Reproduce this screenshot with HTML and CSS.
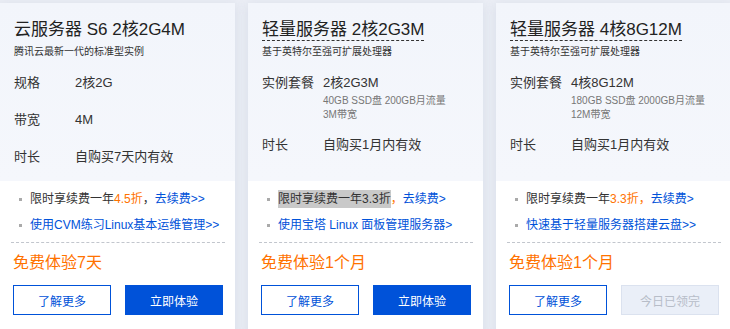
FILE: index.html
```html
<!DOCTYPE html>
<html lang="zh-CN">
<head>
    <meta charset="UTF-8">
    <meta name="viewport" content="width=device-width, initial-scale=1.0">
    <title>服务器免费体验</title>
    <link rel="stylesheet" href="styles.css">
</head>
<body>

    <div class="cards">
        <div class="card">
            <div class="card-top">
                <h2 class="card-title"><span>云服务器 S6 2核2G4M</span></h2>
                <p class="card-desc">腾讯云最新一代的标准型实例</p>
                <div class="specs">
                    <div class="spec-row"><span class="spec-label">规格</span><div class="spec-value">2核2G</div></div>
                    <div class="spec-row"><span class="spec-label">带宽</span><div class="spec-value">4M</div></div>
                    <div class="spec-row"><span class="spec-label">时长</span><div class="spec-value">自购买7天内有效</div></div>
                </div>
            </div>
            <div class="card-bottom">
                <ul class="perks">
                    <li>限时享续费一年<span class="orange">4.5折</span>，<a class="link">去续费&gt;&gt;</a></li>
                    <li><a class="link">使用CVM练习Linux基本运维管理&gt;&gt;</a></li>
                </ul>
                <div class="divider"></div>
                <div class="offer">免费体验7天</div>
                <div class="actions">
                    <button class="btn btn-outline">了解更多</button>
                    <button class="btn btn-primary">立即体验</button>
                </div>
            </div>
        </div>

        <div class="card">
            <div class="card-top">
                <h2 class="card-title"><span class="dashed">轻量服务器 2核2G3M</span></h2>
                <p class="card-desc">基于英特尔至强可扩展处理器</p>
                <div class="specs specs-compact">
                    <div class="spec-row">
                        <span class="spec-label">实例套餐</span>
                        <div class="spec-value">2核2G3M
                            <div class="spec-note">40GB SSD盘 200GB月流量<br>3M带宽</div>
                        </div>
                    </div>
                    <div class="spec-row"><span class="spec-label">时长</span><div class="spec-value">自购买1月内有效</div></div>
                </div>
            </div>
            <div class="card-bottom">
                <ul class="perks">
                    <li><span class="selected">限时享续费一年3.3折</span><span class="orange">，</span><a class="link">去续费&gt;</a></li>
                    <li><a class="link">使用宝塔 Linux 面板管理服务器&gt;</a></li>
                </ul>
                <div class="divider"></div>
                <div class="offer">免费体验1个月</div>
                <div class="actions">
                    <button class="btn btn-outline">了解更多</button>
                    <button class="btn btn-primary">立即体验</button>
                </div>
            </div>
        </div>

        <div class="card">
            <div class="card-top">
                <h2 class="card-title"><span class="dashed">轻量服务器 4核8G12M</span></h2>
                <p class="card-desc">基于英特尔至强可扩展处理器</p>
                <div class="specs specs-compact">
                    <div class="spec-row">
                        <span class="spec-label">实例套餐</span>
                        <div class="spec-value">4核8G12M
                            <div class="spec-note">180GB SSD盘 2000GB月流量<br>12M带宽</div>
                        </div>
                    </div>
                    <div class="spec-row"><span class="spec-label">时长</span><div class="spec-value">自购买1月内有效</div></div>
                </div>
            </div>
            <div class="card-bottom">
                <ul class="perks">
                    <li>限时享续费一年<span class="orange">3.3折，</span> <a class="link">去续费&gt;</a></li>
                    <li><a class="link">快速基于轻量服务器搭建云盘&gt;&gt;</a></li>
                </ul>
                <div class="divider"></div>
                <div class="offer">免费体验1个月</div>
                <div class="actions">
                    <button class="btn btn-outline">了解更多</button>
                    <button class="btn btn-disabled" disabled>今日已领完</button>
                </div>
            </div>
        </div>
    </div>

</body>
</html>
```

FILE: styles.css
```css
body {
    margin: 0;
    background: #ebeef5;
    font-family: "Liberation Sans", "Noto Sans CJK SC", sans-serif;
    color: #333;
    overflow: hidden;
}
.cards {
    display: flex;
    gap: 13px;
    padding-top: 3px;
    width: 731px;
}
.card {
    flex: 0 0 235px;
    background: #fff;
    box-shadow: 0 2px 10px rgba(150, 165, 195, 0.25);
}
.card-top {
    height: 178px;
    box-sizing: border-box;
    padding: 17px 14px 0;
    background: linear-gradient(to bottom, #f2f5fb, #f5f7fc);
}
.card-title {
    margin: 0;
    font-size: 17px;
    font-weight: normal;
    line-height: 20px;
    color: #222;
}
.card-title span {
    display: inline-block;
    border-bottom: 1px solid transparent;
}
.card-title .dashed {
    border-bottom: 1px dashed #333;
}
.card-desc {
    margin: 4px 0 0;
    font-size: 10px;
    line-height: 14px;
    color: #333;
}
.specs {
    display: flex;
    flex-direction: column;
    gap: 17px;
    margin-top: 14px;
}
.specs-compact {
    gap: 13px;
}
.spec-row {
    display: flex;
    font-size: 13px;
    line-height: 20px;
}
.spec-label {
    flex: 0 0 61px;
}
.spec-note {
    margin-top: 1px;
    font-size: 10px;
    line-height: 14px;
    color: #777;
}
.card-bottom {
    padding: 9px 12px 20px 13px;
}
.perks {
    list-style: none;
    margin: 0;
    padding: 0;
    font-size: 12px;
    line-height: 18px;
    color: #333;
}
.perks li {
    display: flex;
    align-items: center;
    white-space: nowrap;
}
.perks li::before {
    content: "";
    flex: 0 0 3px;
    height: 3px;
    margin: 0 8px 0 6px;
    background: #aaa;
}
.perks li + li {
    margin-top: 8px;
}
.orange {
    color: #ff7200;
}
.link {
    color: #0052d9;
    cursor: pointer;
}
.selected {
    background: #c9c9c9;
}
.divider {
    margin: 8px -2px 0;
    border-top: 1px dashed #c2c6cd;
}
.offer {
    margin-top: 9px;
    font-size: 16px;
    line-height: 22px;
    color: #ff7200;
}
.actions {
    display: flex;
    gap: 14px;
    margin-top: 11px;
}
.btn {
    flex: 1;
    height: 30px;
    font-family: inherit;
    font-size: 12px;
    border: 1px solid #0052d9;
    cursor: pointer;
}
.btn-outline {
    background: #fff;
    color: #0052d9;
}
.btn-primary {
    background: #0052d9;
    color: #fff;
}
.btn-disabled {
    background: #eaeff8;
    border-color: #dbe2ef;
    color: #b7bdc8;
    cursor: not-allowed;
}
```
